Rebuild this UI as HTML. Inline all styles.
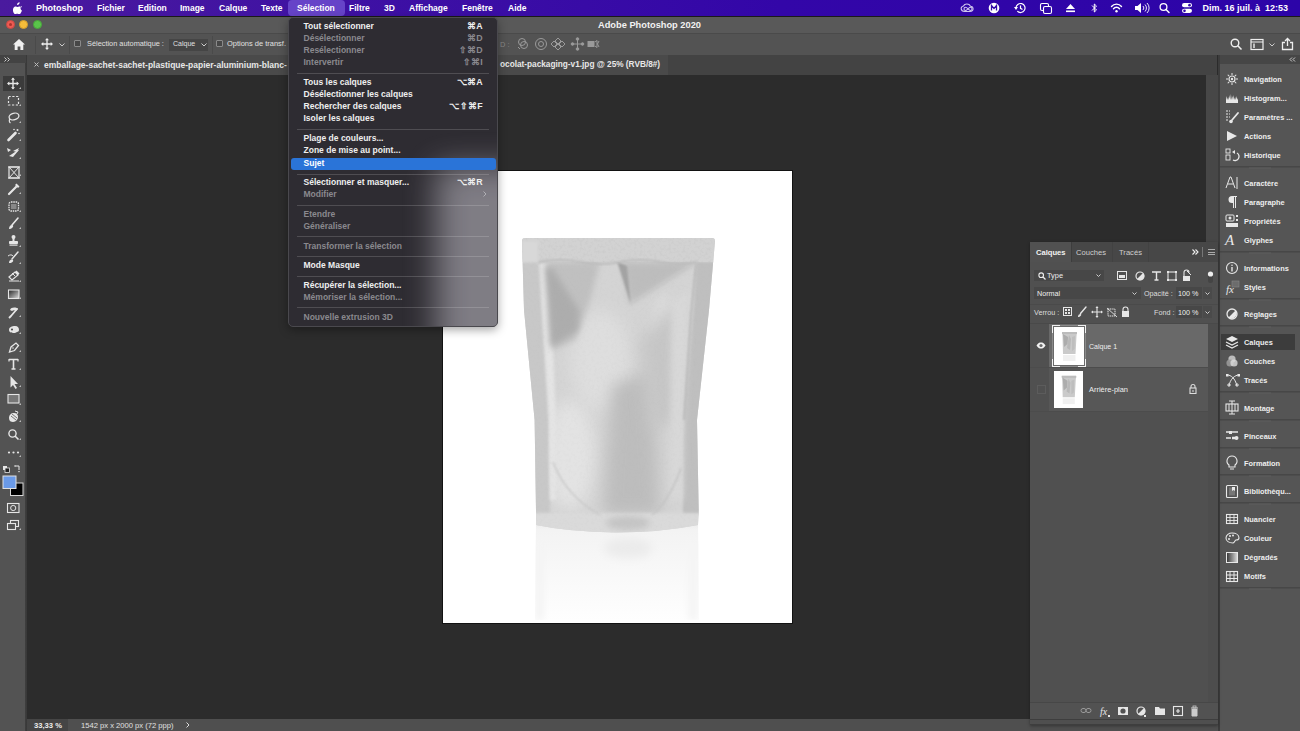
<!DOCTYPE html>
<html><head><meta charset="utf-8">
<style>
*{margin:0;padding:0;box-sizing:border-box}
html,body{width:1300px;height:731px;overflow:hidden;background:#2b2b2b;font-family:"Liberation Sans",sans-serif;color:#e6e6e6}
.a{position:absolute}
.t{position:absolute;white-space:nowrap;line-height:1}
#menubar{left:0;top:0;width:1300px;height:16px;background:linear-gradient(90deg,#4a1a9e 0%,#3d10a4 30%,#3306a8 60%,#2c04a8 100%)}
#menubar .t{color:#fff;font-size:8.5px;font-weight:700;top:4px}
#titlebar{left:0;top:16px;width:1300px;height:17px;background:#595959;border-top:1px solid #1a1a1a}
#options{left:0;top:33px;width:1300px;height:22px;background:#535353;border-top:1px solid #4a4a4a}
#toolbar{left:0;top:55px;width:26px;height:676px;background:#535353}
#tbhead{left:0;top:55px;width:26px;height:8px;background:#434343}
#tabbar{left:27px;top:55px;width:1190px;height:20px;background:#434343}
#tab{left:27px;top:55px;width:641px;height:20px;background:#4a4a4a}
#canvas{left:27px;top:75px;width:1179px;height:644px;background:#2c2c2c}
#vscroll{left:1206px;top:75px;width:12px;height:644px;background:#474747}
#status{left:27px;top:719px;width:1193px;height:12px;background:#4f4f4f}
#dock{left:1220px;top:64px;width:80px;height:667px;background:#555555}
#dockhead{left:1218px;top:55px;width:82px;height:9px;background:#464646}
#image{left:443px;top:171px;width:349px;height:452px;background:#fff;box-shadow:0 0 0 1px #121212}
#layers{left:1030px;top:242px;width:188px;height:483px;background:#505050;box-shadow:0 1px 3px rgba(0,0,0,.35)}
#menu{left:288px;top:17px;width:210px;height:310px;border-radius:5px;overflow:hidden;background:#2e2c32;border:1px solid #4a494e;box-shadow:0 3px 10px rgba(0,0,0,.35)}
</style></head><body>
<div id="menubar" class="a">
<svg class="a" style="left:13px;top:2px" width="10" height="12" viewBox="0 0 10 12"><path fill="#fff" d="M6.6 0.2c0.1 0.8-0.2 1.5-0.7 2.1-0.5 0.5-1.1 0.9-1.8 0.8-0.1-0.7 0.2-1.5 0.7-2 0.5-0.5 1.2-0.9 1.8-0.9zM8.8 4.1c-0.1 0.1-1.3 0.7-1.3 2.2 0 1.7 1.5 2.3 1.5 2.3s-0.4 1.2-1.2 2.3c-0.5 0.7-1 1.3-1.7 1.3-0.8 0-1-0.5-1.9-0.5-0.9 0-1.2 0.5-1.9 0.5-0.7 0-1.2-0.7-1.7-1.4C-0.1 9.400 -0.3 7.400 0.4 6 0.8 5.100 1.700 4.400 2.700 4.400c0.8 0 1.3 0.5 1.900 0.5 0.600 0 1-0.5 1.900-0.500 0.700 0 1.600 0.300 2.300 1.100z"/></svg>
<span class="t" style="left:36px;font-size:9px;font-weight:700">Photoshop</span>
<span class="t" style="left:97px">Fichier</span>
<span class="t" style="left:138px">Edition</span>
<span class="t" style="left:180px">Image</span>
<span class="t" style="left:219px">Calque</span>
<span class="t" style="left:261px">Texte</span>
<div class="a" style="left:288px;top:0;width:57px;height:16px;border-radius:4px;background:#6644c8"></div>
<span class="t" style="left:297px">Sélection</span>
<span class="t" style="left:349px">Filtre</span>
<span class="t" style="left:384px">3D</span>
<span class="t" style="left:409px">Affichage</span>
<span class="t" style="left:462px">Fenêtre</span>
<span class="t" style="left:508px">Aide</span>
<svg class="a" style="left:950px;top:0" width="250" height="16" viewBox="950 0 250 16">
<g fill="none" stroke="#cfc6ee" stroke-width="1.1" transform="translate(3.5 0)"><path d="M961 11.5C957 11.5 956.5 6.5 960 6 961 3.5 965.5 3.2 967 6.2 970 6 971 11.5 966.5 11.5Z"/><path d="M962 10.5C960 10.5 960 7.3 962 7.3S965 10.5 967 10.5 969 7.3 967 7.3 963.5 10.5 962 10.5Z"/></g>
<circle cx="994" cy="8" r="5.3" fill="#ffffff"/><path d="M991.5 10.5V5.5L994 8.5L996.5 5.5V10.5" fill="none" stroke="#3208a8" stroke-width="1.3"/>
<g fill="none" stroke="#ffffff" stroke-width="1.2"><path d="M1016 8A4.5 4.5 0 1 1 1017.3 11.2"/><path d="M1020.5 5.5V8.3L1022.5 9.5"/></g><path d="M1014 7L1016 10L1018 7Z" fill="#ffffff"/>
<g fill="none" stroke="#ffffff" stroke-width="1.1"><rect x="1040.5" y="3.5" width="8" height="7" rx="1.5"/><rect x="1043.5" y="6.5" width="8" height="7" rx="1.5" fill="#3208a8"/></g>
<path d="M1066 9L1070.5 4L1075 9Z" fill="#ffffff"/><rect x="1066" y="10.5" width="9" height="1.6" fill="#ffffff"/>
<path d="M1092 5.5L1096.5 10L1094.3 12V4L1096.5 6L1092 10.5" fill="none" stroke="#ffffff" stroke-width="1"/>
<g fill="none" stroke="#ffffff" stroke-width="1.4" stroke-linecap="round"><path d="M1111.5 6.5A6.5 6.5 0 0 1 1121.5 6.5"/><path d="M1113.5 8.7A3.8 3.8 0 0 1 1119.5 8.7"/></g><circle cx="1116.5" cy="11.3" r="1.2" fill="#ffffff"/>
<path d="M1135 6H1137.5L1141 3V13L1137.5 10H1135Z" fill="#ffffff"/><g fill="none" stroke="#ffffff" stroke-width="0.9"><path d="M1143 6A3 3 0 0 1 1143 10"/><path d="M1145 4.5A5 5 0 0 1 1145 11.5"/><path d="M1147 3A7 7 0 0 1 1147 13"/></g>
<circle cx="1163.5" cy="7" r="3.4" fill="none" stroke="#ffffff" stroke-width="1.3"/><path d="M1166 9.5L1169 12.5" stroke="#ffffff" stroke-width="1.5" stroke-linecap="round"/>
<rect x="1182" y="3" width="10" height="4.3" rx="2.15" fill="#ffffff"/><rect x="1182" y="8.7" width="10" height="4.3" rx="2.15" fill="#ffffff"/><circle cx="1189.5" cy="5.15" r="1.3" fill="#3208a8"/><circle cx="1184.5" cy="10.85" r="1.3" fill="#3208a8"/>
</svg>
<span class="t" style="left:1202.5px;font-size:9px;top:3.5px">Dim. 16 juil. à&nbsp; 12:53</span>
</div>
<div id="titlebar" class="a">
<div class="a" style="left:5.5px;top:3px;width:9px;height:9px;border-radius:50%;background:#ee5a52;border:1px solid #c94a44"><div class="a" style="left:2px;top:2px;width:3px;height:3px;border-radius:50%;background:#7a1a16;opacity:.6"></div></div>
<div class="a" style="left:19.2px;top:3px;width:9px;height:9px;border-radius:50%;background:#f5bd3a;border:1px solid #d49e2c"></div>
<div class="a" style="left:32.8px;top:3px;width:9px;height:9px;border-radius:50%;background:#5ac54a;border:1px solid #48a83c"></div>
<span class="t" style="left:598px;top:4px;font-size:9.27px;font-weight:700;color:#f2f2f2">Adobe Photoshop 2020</span>
</div>
<div id="options" class="a">
<svg class="a" style="left:13px;top:4.5px" width="12" height="11" viewBox="0 0 12 11"><path fill="#f0f0f0" d="M6 0 L12 5.5 L10.3 5.5 L10.3 11 L7.4 11 L7.4 7.5 L4.6 7.5 L4.6 11 L1.7 11 L1.7 5.5 L0 5.5Z"/></svg>
<div class="a" style="left:35px;top:2px;width:1px;height:18px;background:#4a4a4a"></div>
<svg class="a" style="left:41px;top:3.5px" width="12" height="12" viewBox="0 0 12 12"><path fill="none" stroke="#eee" stroke-width="1.3" d="M6 1V11M1 6H11"/><path fill="#eee" d="M6 0L8 2.3H4ZM6 12L8 9.7H4ZM0 6L2.3 4V8ZM12 6L9.7 4V8Z"/></svg>
<svg class="a" style="left:59px;top:8.5px" width="6" height="4" viewBox="0 0 6 4"><path fill="none" stroke="#ccc" stroke-width="1" d="M0.5 0.5L3 3L5.5 0.5"/></svg>
<div class="a" style="left:69px;top:2px;width:1px;height:18px;background:#4a4a4a"></div>
<div class="a" style="left:74px;top:6px;width:7px;height:7px;border:1px solid #8a8a8a;background:#474747;border-radius:1px"></div>
<span class="t" style="left:87px;top:6px;font-size:7.37px;color:#e0e0e0">Sélection automatique :</span>
<div class="a" style="left:169px;top:5px;width:39px;height:12px;background:#454545"></div>
<span class="t" style="left:173px;top:6px;font-size:7px;color:#e0e0e0">Calque</span>
<svg class="a" style="left:201px;top:8.5px" width="6" height="4" viewBox="0 0 6 4"><path fill="none" stroke="#ccc" stroke-width="1" d="M0.5 0.5L3 3L5.5 0.5"/></svg>
<div class="a" style="left:212px;top:2px;width:1px;height:18px;background:#4a4a4a"></div>
<div class="a" style="left:216px;top:6px;width:7px;height:7px;border:1px solid #8a8a8a;background:#474747;border-radius:1px"></div>
<span class="t" style="left:227px;top:6px;font-size:7.47px;color:#e0e0e0">Options de transf.</span>
<span class="t" style="left:500px;top:7px;font-size:7.4px;color:#8a8a8a">D :</span>
<svg class="a" style="left:516px;top:3px" width="90" height="14" viewBox="0 0 90 14" fill="none" stroke="#9a9a9a" stroke-width="1">
<circle cx="6" cy="5" r="3.5"/><circle cx="8" cy="8" r="3.5"/><path d="M2 10l2 2"/>
<circle cx="25" cy="7" r="5.5"/><circle cx="25" cy="7" r="2.5"/>
<path d="M42 1l3 3-3 3-3-3zM42 7l3 3-3 3-3-3zM38 4l3 3-3 3-3-3zM46 4l3 3-3 3-3-3z"/>
<g transform="translate(-2.5 0)"><path d="M59 7h10M64 2v10"/><circle cx="64" cy="2" r="1.3" fill="#9a9a9a"/><circle cx="64" cy="12" r="1.3" fill="#9a9a9a"/><circle cx="59" cy="7" r="1.3" fill="#9a9a9a"/><circle cx="69" cy="7" r="1.3" fill="#9a9a9a"/></g>
<g transform="translate(-3 0)"><rect x="75" y="4.5" width="6" height="5" fill="#9a9a9a"/><path d="M82 5l2-1.5v7L82 9M86 4l-1.5 3 1.5 3"/></g>
</svg>
<svg class="a" style="left:1230px;top:4px" width="13" height="13" viewBox="0 0 13 13"><circle cx="5" cy="5" r="3.8" fill="none" stroke="#eee" stroke-width="1.4"/><path d="M7.8 7.8L11.5 11.5" stroke="#eee" stroke-width="1.6"/></svg>
<svg class="a" style="left:1250px;top:4px" width="14" height="13" viewBox="0 0 14 13"><rect x="1" y="1.5" width="12" height="10" fill="none" stroke="#eee" stroke-width="1.2"/><path d="M1 4H13" stroke="#eee" stroke-width="1"/><path d="M4 5.5V10" stroke="#eee" stroke-width="1.4"/></svg>
<svg class="a" style="left:1269px;top:9px" width="6" height="4" viewBox="0 0 6 4"><path fill="none" stroke="#ccc" stroke-width="1" d="M0.5 0.5L3 3L5.5 0.5"/></svg>
<svg class="a" style="left:1281px;top:3px" width="13" height="14" viewBox="0 0 13 14"><path fill="none" stroke="#eee" stroke-width="1.3" d="M4 5.5H1.5V12.5H11.5V5.5H9M6.5 9V1.5M4 4L6.5 1.5L9 4"/></svg>
</div>
<div id="toolbar" class="a"></div>
<div class="a" style="left:25px;top:55px;width:3px;height:676px;background:linear-gradient(90deg,#3f3f3f,#343434)"></div>
<svg class="a" style="left:0;top:0" width="26" height="731" viewBox="0 0 26 731"><rect x="3" y="76" width="21" height="15" fill="#3b3b3b"/><path d="M13 78.5V88.5M8 83.5H18" stroke="#e6e6e6" stroke-width="1.4"/><path fill="#e6e6e6" d="M13 77.5l2 2.3h-4zM13 89.5l2 -2.3h-4zM7 83.5l2.3 2v-4zM19 83.5l-2.3 2v-4z"/><rect x="8.5" y="96.5" width="10" height="8.5" fill="none" stroke="#e6e6e6" stroke-width="1.2" stroke-dasharray="2.2 1.6"/><ellipse cx="14" cy="116.5" rx="5" ry="3.3" fill="none" stroke="#e6e6e6" stroke-width="1.3" transform="rotate(-15 14 116.5)"/><path d="M10 119c-1 1 -1 3 0.5 4" fill="none" stroke="#e6e6e6" stroke-width="1.2"/><path d="M8.5 140L15.5 133" stroke="#e6e6e6" stroke-width="2.6" stroke-linecap="round"/><circle cx="17.5" cy="130" r="1" fill="#e6e6e6"/><circle cx="14" cy="129.5" r="0.8" fill="#e6e6e6"/><circle cx="19" cy="133.5" r="0.8" fill="#e6e6e6"/><path fill="#e6e6e6" d="M7 148l4 2-3 2zM9 156l9-6 1 0-6 7z"/><path fill="#e6e6e6" d="M13 151l6-3-2 4z"/><rect x="9" y="167" width="10" height="11" fill="none" stroke="#e6e6e6" stroke-width="1.2"/><path d="M9 167L19 178M19 167L9 178" stroke="#e6e6e6" stroke-width="1"/><path d="M8 167H20M8 178H20" stroke="#e6e6e6" stroke-width="1.2"/><path d="M9 194L16 187" stroke="#e6e6e6" stroke-width="2.2" stroke-linecap="round" fill="none"/><path d="M15 185l3 3 1.5-1.5-3-3z" fill="#e6e6e6"/><rect x="9" y="202" width="9.5" height="9" rx="2" fill="none" stroke="#e6e6e6" stroke-width="1.3" stroke-dasharray="1.5 0.8"/><rect x="11" y="204" width="5.5" height="5" fill="#888"/><path d="M18 218L12 225" stroke="#e6e6e6" stroke-width="1.6" stroke-linecap="round"/><path d="M9 229c0-2 1-4 3-4 1.5 0 1.5 1.5 0.5 2.5-1 1-2.5 1.5-3.5 1.5z" fill="#e6e6e6"/><circle cx="13.5" cy="237" r="2" fill="#e6e6e6"/><rect x="12.5" y="238" width="2" height="3" fill="#e6e6e6"/><rect x="9" y="241" width="9" height="3" rx="0.8" fill="#e6e6e6"/><rect x="9.5" y="244.5" width="8" height="1.2" fill="#e6e6e6"/><path d="M18 252L12 259" stroke="#e6e6e6" stroke-width="1.5" stroke-linecap="round"/><path d="M9 263c0-2 1-3.5 3-3.5 1.5 0 1.5 1.5 0.5 2.5-1 1-2.5 1-3.5 1z" fill="#e6e6e6"/><path d="M8 256c2-1.5 4-1.5 5 0" fill="none" stroke="#e6e6e6" stroke-width="1"/><path d="M9 277l6-5 3 3-6 5z" fill="none" stroke="#e6e6e6" stroke-width="1.2"/><path d="M12 273l3 3" stroke="#e6e6e6" stroke-width="1"/><path d="M9 281H19" stroke="#e6e6e6" stroke-width="1"/><path d="M15 272l3 3 1.5-1.5-3-3z" fill="#e6e6e6"/><defs><linearGradient id="gr" x1="0" y1="0" x2="1" y2="1"><stop offset="0" stop-color="#222"/><stop offset="1" stop-color="#ddd"/></linearGradient></defs><rect x="8.5" y="290" width="10.5" height="8.5" fill="url(#gr)" stroke="#e6e6e6" stroke-width="1.1"/><path d="M11 316L17 309" stroke="#e6e6e6" stroke-width="1.8" stroke-linecap="round"/><path d="M10 310c1-3 6-3 8-1l-2 2c-1-1-3-1-4 0z" fill="#e6e6e6"/><path d="M9 318l2-2" stroke="#e6e6e6" stroke-width="1.8"/><path d="M9 330c0-3 3-4 6-4 3 0 4 2 4 4 0 1-1 2-2 2l-2 1c-2 0-6 0-6-3z" fill="#e6e6e6"/><circle cx="12" cy="329.5" r="1" fill="#444"/><path d="M9.5 352l1.5-5 5-4 2.5 2.5-4 5z" fill="none" stroke="#e6e6e6" stroke-width="1.3"/><circle cx="13" cy="348" r="0.8" fill="#e6e6e6"/><path d="M9 359.5H18M13.5 359.5V369M11.5 369H15.5" stroke="#e6e6e6" stroke-width="1.6" fill="none"/><path d="M9 359V361.5M18 359V361.5" stroke="#e6e6e6" stroke-width="1.2"/><path d="M10.5 376V387.5L13 385L15.5 389L17 388L14.5 384H18z" fill="#e6e6e6"/><rect x="8" y="394.5" width="11" height="8.5" fill="#777" stroke="#e6e6e6" stroke-width="1.1"/><path d="M9 418c0-3 2-5 5-5s4 2 4 4-2 5-5 5c-2 0-4-1-4-4z" fill="#e6e6e6"/><path d="M11 416l5 4M12 414l5 4" stroke="#555" stroke-width="0.8"/><path d="M15 411l3 1-1 2" fill="none" stroke="#e6e6e6" stroke-width="1"/><circle cx="12.5" cy="433.5" r="3.6" fill="none" stroke="#e6e6e6" stroke-width="1.4"/><path d="M15 436L18.5 439.5" stroke="#e6e6e6" stroke-width="1.6"/><circle cx="9" cy="452.5" r="1.1" fill="#e6e6e6"/><circle cx="13.5" cy="452.5" r="1.1" fill="#e6e6e6"/><circle cx="18" cy="452.5" r="1.1" fill="#e6e6e6"/><rect x="3" y="466" width="4" height="4" fill="#e6e6e6"/><rect x="5" y="468" width="4.5" height="4.5" fill="#222" stroke="#e6e6e6" stroke-width="0.8"/><path d="M15 466h4v4" fill="none" stroke="#e6e6e6" stroke-width="1"/><path d="M14.5 465l1.5 1-1.5 1zM18 471l1 1.5 1-1.5z" fill="#e6e6e6"/><rect x="10.5" y="483" width="12.5" height="12.5" fill="#000" stroke="#d8d8d8" stroke-width="1"/><rect x="3" y="476" width="13" height="12.5" fill="#6a9ae8" stroke="#e0e0e0" stroke-width="1"/><rect x="7.5" y="503.5" width="11.5" height="9" fill="none" stroke="#e6e6e6" stroke-width="1.1"/><circle cx="13.2" cy="508" r="2.6" fill="none" stroke="#e6e6e6" stroke-width="1"/><rect x="10.5" y="520.5" width="8" height="6" fill="none" stroke="#e6e6e6" stroke-width="1.1"/><rect x="7.5" y="523.5" width="8" height="6" fill="#535353" stroke="#e6e6e6" stroke-width="1.1"/><path d="M21 89h-2l2-2z" fill="#bbb"/><path d="M21 106h-2l2-2z" fill="#bbb"/><path d="M21 123h-2l2-2z" fill="#bbb"/><path d="M21 141h-2l2-2z" fill="#bbb"/><path d="M21 159h-2l2-2z" fill="#bbb"/><path d="M21 176h-2l2-2z" fill="#bbb"/><path d="M21 194h-2l2-2z" fill="#bbb"/><path d="M21 212h-2l2-2z" fill="#bbb"/><path d="M21 229h-2l2-2z" fill="#bbb"/><path d="M21 247h-2l2-2z" fill="#bbb"/><path d="M21 264h-2l2-2z" fill="#bbb"/><path d="M21 282h-2l2-2z" fill="#bbb"/><path d="M21 299h-2l2-2z" fill="#bbb"/><path d="M21 317h-2l2-2z" fill="#bbb"/><path d="M21 334h-2l2-2z" fill="#bbb"/><path d="M21 352h-2l2-2z" fill="#bbb"/><path d="M21 370h-2l2-2z" fill="#bbb"/><path d="M21 387h-2l2-2z" fill="#bbb"/><path d="M21 405h-2l2-2z" fill="#bbb"/><path d="M21 422h-2l2-2z" fill="#bbb"/><path d="M21 440h-2l2-2z" fill="#bbb"/><path d="M21 457h-2l2-2z" fill="#bbb"/><path d="M21 530h-2l2-2z" fill="#bbb"/></svg>
<div id="tbhead" class="a"><svg class="a" style="left:4px;top:2px" width="7" height="5" viewBox="0 0 7 5"><path d="M0.5 0.5L2.5 2.5L0.5 4.5M3.5 0.5L5.5 2.5L3.5 4.5" fill="none" stroke="#ccc" stroke-width="1"/></svg></div>
<div id="tabbar" class="a"></div>
<div id="tab" class="a">
<svg class="a" style="left:7px;top:7px" width="5" height="5" viewBox="0 0 5 5"><path d="M0.5 0.5L4.5 4.5M4.5 0.5L0.5 4.5" stroke="#bbb" stroke-width="1"/></svg>
<span class="t" style="left:17px;top:6px;font-size:8.51px;font-weight:700;color:#e8e8e8">emballage-sachet-sachet-plastique-papier-aluminium-blanc-</span><span class="t" style="left:473px;top:6px;font-size:8.25px;font-weight:700;color:#e8e8e8">ocolat-packaging-v1.jpg @ 25% (RVB/8#)</span>
</div>
<div id="canvas" class="a"></div>
<div id="vscroll" class="a"></div>
<div id="status" class="a">
<div class="a" style="left:0;top:0;width:41px;height:12px;background:#454545"></div>
<span class="t" style="left:7px;top:2.5px;font-size:7.63px;font-weight:700;color:#ececec">33,33 %</span>
<span class="t" style="left:54px;top:2.5px;font-size:7.6px;color:#e0e0e0">1542 px x 2000 px (72 ppp)</span>
<svg class="a" style="left:159px;top:3px" width="4" height="6" viewBox="0 0 4 6"><path d="M0.5 0.5L3 3L0.5 5.5" fill="none" stroke="#ddd" stroke-width="1"/></svg>
</div>
<div id="dockhead" class="a"></div>
<div id="dock" class="a"></div>
<div class="a" style="left:1218px;top:55px;width:2px;height:676px;background:#3c3c3c"></div>
<svg class="a" style="left:0;top:0" width="1300" height="731" viewBox="0 0 1300 731"><defs><linearGradient id="gr2" x1="0" y1="0" x2="1" y2="0"><stop offset="0" stop-color="#333"/><stop offset="1" stop-color="#ddd"/></linearGradient></defs><rect x="1221" y="334" width="74" height="16" fill="#3c3c3c"/><g transform="translate(1226,73)"><circle cx="6" cy="6" r="3" fill="none" stroke="#e8e8e8" stroke-width="1.2"/><circle cx="6" cy="6" r="1.2" fill="#e8e8e8"/><path d="M6 0L6 2" transform="rotate(0 6 6)" stroke="#e8e8e8" stroke-width="1"/><path d="M6 0L6 2" transform="rotate(45 6 6)" stroke="#e8e8e8" stroke-width="1"/><path d="M6 0L6 2" transform="rotate(90 6 6)" stroke="#e8e8e8" stroke-width="1"/><path d="M6 0L6 2" transform="rotate(135 6 6)" stroke="#e8e8e8" stroke-width="1"/><path d="M6 0L6 2" transform="rotate(180 6 6)" stroke="#e8e8e8" stroke-width="1"/><path d="M6 0L6 2" transform="rotate(225 6 6)" stroke="#e8e8e8" stroke-width="1"/><path d="M6 0L6 2" transform="rotate(270 6 6)" stroke="#e8e8e8" stroke-width="1"/><path d="M6 0L6 2" transform="rotate(315 6 6)" stroke="#e8e8e8" stroke-width="1"/></g><text x="1244" y="81.8" font-family="Liberation Sans" font-weight="700" font-size="7.4" fill="#eeeeee">Navigation</text><g transform="translate(1226,93)"><path d="M0 10V7L0.7 3 1.4 7 2.1 4 2.8 7 3.5 2 4.2 7 4.9 1 5.6 7 6.3 3 7 7 7.7 2 8.4 7 9.1 4 9.8 7 10.5 3 11.2 7 12 5V10Z" fill="#e8e8e8"/></g><text x="1244" y="100.8" font-family="Liberation Sans" font-weight="700" font-size="7.4" fill="#eeeeee">Histogram...</text><g transform="translate(1226,110)"><path d="M0 1H2M0 4H2M0 7H2M0 10H2M3 1H4M3 4H4M3 7H4" stroke="#e8e8e8" stroke-width="1"/><path d="M12 3L6 10" stroke="#e8e8e8" stroke-width="1.8" stroke-linecap="round"/><circle cx="5" cy="11.5" r="1.8" fill="#e8e8e8"/></g><text x="1244" y="119.8" font-family="Liberation Sans" font-weight="700" font-size="7.4" fill="#eeeeee">Paramètres ...</text><g transform="translate(1226,131)"><path d="M1 0L11 5L1 10Z" fill="#e8e8e8"/></g><text x="1244" y="138.8" font-family="Liberation Sans" font-weight="700" font-size="7.4" fill="#eeeeee">Actions</text><g transform="translate(1226,149)"><rect x="0" y="0" width="4" height="4" fill="none" stroke="#e8e8e8" stroke-width="0.9"/><rect x="0" y="6" width="4" height="5" fill="none" stroke="#e8e8e8" stroke-width="0.9"/><path d="M11 4A4 4 0 1 1 7 11" fill="none" stroke="#e8e8e8" stroke-width="1.3"/><path d="M6 3L9 1V5Z" fill="#e8e8e8"/></g><text x="1244" y="157.8" font-family="Liberation Sans" font-weight="700" font-size="7.4" fill="#eeeeee">Historique</text><rect x="1220" y="166" width="80" height="1.5" fill="#474747"/><rect x="1249" y="167.5" width="22" height="1" fill="#5e5e5e"/><g transform="translate(1226,177)"><path d="M0 11L4 0H5L9 11M2 7H7" fill="none" stroke="#e8e8e8" stroke-width="1"/><path d="M11 0V12" stroke="#e8e8e8" stroke-width="1"/></g><text x="1244" y="185.8" font-family="Liberation Sans" font-weight="700" font-size="7.4" fill="#eeeeee">Caractère</text><g transform="translate(1227,196)"><path d="M5 0H10V1H9V12H8V1H7V12H6V7H5A3.5 3.5 0 0 1 5 0Z" fill="#e8e8e8"/></g><text x="1244" y="204.8" font-family="Liberation Sans" font-weight="700" font-size="7.4" fill="#eeeeee">Paragraphe</text><g transform="translate(1226,215)"><rect x="0" y="0" width="8" height="6" rx="1" fill="none" stroke="#e8e8e8" stroke-width="1"/><circle cx="4" cy="3" r="1.5" fill="#e8e8e8"/><rect x="10" y="0" width="2" height="2" fill="#e8e8e8"/><rect x="10" y="4" width="2" height="2" fill="#e8e8e8"/><rect x="0" y="8" width="12" height="4" fill="#e8e8e8"/></g><text x="1244" y="223.8" font-family="Liberation Sans" font-weight="700" font-size="7.4" fill="#eeeeee">Propriétés</text><text x="1225" y="245" font-family="Liberation Serif" font-style="italic" font-size="15" fill="#e8e8e8">A</text><text x="1244" y="242.8" font-family="Liberation Sans" font-weight="700" font-size="7.4" fill="#eeeeee">Glyphes</text><rect x="1220" y="251" width="80" height="1.5" fill="#474747"/><rect x="1249" y="252.5" width="22" height="1" fill="#5e5e5e"/><g transform="translate(1226,262)"><circle cx="6" cy="6" r="5.5" fill="none" stroke="#e8e8e8" stroke-width="1.1"/><path d="M6 5V9.5" stroke="#e8e8e8" stroke-width="1.4"/><circle cx="6" cy="3.2" r="0.8" fill="#e8e8e8"/></g><text x="1244" y="270.8" font-family="Liberation Sans" font-weight="700" font-size="7.4" fill="#eeeeee">Informations</text><g transform="translate(1226,281)"><rect x="6" y="0" width="7" height="6" fill="#6c6c6c" stroke="#888" stroke-width="0.6"/><text x="0" y="12" font-family="Liberation Serif" font-style="italic" font-size="11" fill="#e8e8e8">fx</text></g><text x="1244" y="289.8" font-family="Liberation Sans" font-weight="700" font-size="7.4" fill="#eeeeee">Styles</text><rect x="1220" y="298" width="80" height="1.5" fill="#474747"/><rect x="1249" y="299.5" width="22" height="1" fill="#5e5e5e"/><g transform="translate(1226,308)"><circle cx="6" cy="6" r="5" fill="none" stroke="#e8e8e8" stroke-width="1.3"/><path d="M2.5 9.5L9.5 2.5A5 5 0 0 1 2.5 9.5Z" fill="#e8e8e8"/></g><text x="1244" y="316.8" font-family="Liberation Sans" font-weight="700" font-size="7.4" fill="#eeeeee">Réglages</text><rect x="1220" y="325" width="80" height="1.5" fill="#474747"/><rect x="1249" y="326.5" width="22" height="1" fill="#5e5e5e"/><g transform="translate(1226,336)"><path d="M6 0L12 3L6 6L0 3Z" fill="#e8e8e8"/><path d="M0 6L6 9L12 6M0 9L6 12L12 9" fill="none" stroke="#e8e8e8" stroke-width="1.2"/></g><text x="1244" y="344.8" font-family="Liberation Sans" font-weight="700" font-size="7.4" fill="#eeeeee">Calques</text><g transform="translate(1226,355)"><circle cx="6" cy="4" r="3.6" fill="#bbb"/><circle cx="4" cy="8" r="3.6" fill="#999" opacity=".9"/><circle cx="8" cy="8" r="3.6" fill="#ddd" opacity=".8"/></g><text x="1244" y="363.8" font-family="Liberation Sans" font-weight="700" font-size="7.4" fill="#eeeeee">Couches</text><g transform="translate(1226,374)"><path d="M1 1C5 1 9 4 11 12M13 1C9 1 4 5 3 12" fill="none" stroke="#e8e8e8" stroke-width="1"/><rect x="0" y="0" width="2.5" height="2.5" fill="#e8e8e8"/><rect x="11.5" y="0" width="2.5" height="2.5" fill="#e8e8e8"/><circle cx="3" cy="11" r="1.2" fill="none" stroke="#e8e8e8"/><circle cx="11" cy="11" r="1.2" fill="none" stroke="#e8e8e8"/></g><text x="1244" y="382.8" font-family="Liberation Sans" font-weight="700" font-size="7.4" fill="#eeeeee">Tracés</text><rect x="1220" y="391" width="80" height="1.5" fill="#474747"/><rect x="1249" y="392.5" width="22" height="1" fill="#5e5e5e"/><g transform="translate(1226,401)"><rect x="0" y="3" width="12" height="7" fill="none" stroke="#e8e8e8" stroke-width="1.1"/><path d="M3 3V10M6 0V13M3 0H9M3 13H9M9 3V10" stroke="#e8e8e8" stroke-width="1"/></g><text x="1244" y="410.8" font-family="Liberation Sans" font-weight="700" font-size="7.4" fill="#eeeeee">Montage</text><rect x="1220" y="419" width="80" height="1.5" fill="#474747"/><rect x="1249" y="420.5" width="22" height="1" fill="#5e5e5e"/><g transform="translate(1226,431)"><path d="M0 1H12M0 7H5" stroke="#e8e8e8" stroke-width="1.3"/><rect x="3" y="0" width="3" height="3" fill="#e8e8e8"/><path d="M6 7H9" stroke="#e8e8e8" stroke-width="2.5"/><circle cx="10.5" cy="7" r="2" fill="#e8e8e8"/></g><text x="1244" y="438.8" font-family="Liberation Sans" font-weight="700" font-size="7.4" fill="#eeeeee">Pinceaux</text><rect x="1220" y="447" width="80" height="1.5" fill="#474747"/><rect x="1249" y="448.5" width="22" height="1" fill="#5e5e5e"/><g transform="translate(1227,456)"><path d="M5 0A5 5 0 0 1 8 9V11H2V9A5 5 0 0 1 5 0Z" fill="none" stroke="#e8e8e8" stroke-width="1.1"/><path d="M3 13H7" stroke="#e8e8e8" stroke-width="1"/></g><text x="1244" y="465.8" font-family="Liberation Sans" font-weight="700" font-size="7.4" fill="#eeeeee">Formation</text><rect x="1220" y="474" width="80" height="1.5" fill="#474747"/><rect x="1249" y="475.5" width="22" height="1" fill="#5e5e5e"/><g transform="translate(1226,485)"><rect x="0.5" y="0.5" width="11" height="12" rx="1" fill="none" stroke="#e8e8e8" stroke-width="1.1"/><rect x="3" y="2.5" width="6" height="8" fill="#777"/><path d="M6 2V6L7.5 5L9 6V2" fill="#e8e8e8"/></g><text x="1244" y="493.8" font-family="Liberation Sans" font-weight="700" font-size="7.4" fill="#eeeeee">Bibliothèqu...</text><rect x="1220" y="502" width="80" height="1.5" fill="#474747"/><rect x="1249" y="503.5" width="22" height="1" fill="#5e5e5e"/><g transform="translate(1226,514)"><rect x="0.5" y="0.5" width="11" height="9" fill="none" stroke="#e8e8e8" stroke-width="1.1"/><path d="M0 3.5H12M0 6.5H12M4 0V10M8 0V10" stroke="#e8e8e8" stroke-width="0.9"/></g><text x="1244" y="521.8" font-family="Liberation Sans" font-weight="700" font-size="7.4" fill="#eeeeee">Nuancier</text><g transform="translate(1226,533)"><path d="M6 0C10 0 13 2 13 5 13 7 11 7 10 7 9 7 9 9 7 10 3 10 0 8 0 5 0 2 3 0 6 0Z" fill="none" stroke="#e8e8e8" stroke-width="1.1"/><circle cx="4" cy="3" r="1" fill="#e8e8e8"/><circle cx="7" cy="2.5" r="1" fill="#e8e8e8"/><circle cx="3" cy="6" r="1" fill="#e8e8e8"/></g><text x="1244" y="540.8" font-family="Liberation Sans" font-weight="700" font-size="7.4" fill="#eeeeee">Couleur</text><g transform="translate(1226,552)"><rect x="0.5" y="0.5" width="11" height="10" fill="url(#gr2)" stroke="#e8e8e8" stroke-width="1"/></g><text x="1244" y="559.8" font-family="Liberation Sans" font-weight="700" font-size="7.4" fill="#eeeeee">Dégradés</text><g transform="translate(1226,571)"><rect x="0.5" y="0.5" width="11" height="10" fill="none" stroke="#e8e8e8" stroke-width="1.1"/><path d="M4 0V11M8 0V11M0 4H12M0 7.5H12" stroke="#e8e8e8" stroke-width="1"/></g><text x="1244" y="578.8" font-family="Liberation Sans" font-weight="700" font-size="7.4" fill="#eeeeee">Motifs</text><rect x="1220" y="587" width="80" height="1.5" fill="#474747"/><rect x="1249" y="588.5" width="22" height="1" fill="#5e5e5e"/></svg>
<svg class="a" style="left:1289px;top:57px" width="7" height="5" viewBox="0 0 7 5"><path d="M3 0.5L1 2.5L3 4.5M6 0.5L4 2.5L6 4.5" fill="none" stroke="#ccc" stroke-width="1"/></svg>
<div id="image" class="a"><svg class="a" style="left:0;top:0" width="349" height="452" viewBox="0 0 349 452">
<defs>
<clipPath id="pc"><path d="M82.0 67.0 L269.0 67.0 Q272.0 67.0 272.0 70.0 L266.0 139.0 L254.0 249.0 L255.7 339.0 L255.0 354.0 Q217.0 361.5 172.0 361.5 Q127.0 361.0 93.0 354.0 L93.0 339.0 L91.6 249.0 L81.0 139.0 L79.0 70.0 Q79.0 67.0 82.0 67.0 Z"/></clipPath>
<clipPath id="rc"><path d="M93.0 349.0 Q127.0 357.0 172.0 357.5 Q217.0 357.5 255.0 349.0 L256.0 449.0 L92.0 449.0 Z"/></clipPath>
<linearGradient id="rg" x1="0" y1="0" x2="0" y2="1"><stop offset="0" stop-color="#e9e9e9"/><stop offset="0.1" stop-color="#f3f3f3"/><stop offset="1" stop-color="#fefefe"/></linearGradient>
<filter id="b8" x="-50%" y="-50%" width="200%" height="200%"><feGaussianBlur stdDeviation="8"/></filter>
<filter id="b5" x="-50%" y="-50%" width="200%" height="200%"><feGaussianBlur stdDeviation="5"/></filter>
<filter id="b3" x="-50%" y="-50%" width="200%" height="200%"><feGaussianBlur stdDeviation="3"/></filter>
<filter id="b2" x="-50%" y="-50%" width="200%" height="200%"><feGaussianBlur stdDeviation="1.8"/></filter>
<filter id="b1" x="-50%" y="-50%" width="200%" height="200%"><feGaussianBlur stdDeviation="0.9"/></filter>
<filter id="tex" x="0" y="0" width="100%" height="100%"><feTurbulence type="fractalNoise" baseFrequency="0.35" numOctaves="2" seed="3"/><feColorMatrix values="0 0 0 0 0.5  0 0 0 0 0.5  0 0 0 0 0.5  0 0 0 1.6 -0.75"/></filter>
</defs>
<path d="M93.0 349.0 Q127.0 357.0 172.0 357.5 Q217.0 357.5 255.0 349.0 L256.0 449.0 L92.0 449.0 Z" fill="url(#rg)"/>
<g clip-path="url(#rc)">
<ellipse cx="185" cy="377" rx="24" ry="10" fill="#ebebeb" filter="url(#b5)"/>
<rect x="92" y="369" width="9" height="80" fill="#f4f4f4" filter="url(#b3)"/>
<rect x="245" y="369" width="10" height="80" fill="#f5f5f5" filter="url(#b3)"/>
</g>
<g clip-path="url(#pc)">
<rect x="70" y="60" width="220" height="320" fill="#d4d4d4"/>
<ellipse cx="157" cy="189" rx="30" ry="50" fill="#dedede" filter="url(#b8)"/>
<ellipse cx="127" cy="284" rx="25" ry="55" fill="#e3e3e3" filter="url(#b8)"/>
<ellipse cx="222" cy="169" rx="14" ry="45" fill="#dcdcdc" filter="url(#b5)"/>
<polygon points="169.0,214.0 209.0,201.0 217.0,344.0 160.0,344.0" fill="#bdbdbd" filter="url(#b8)"/>
<polygon points="197.0,169.0 237.0,129.0 233.0,249.0 207.0,259.0" fill="#c6c6c6" filter="url(#b8)"/>
<polygon points="77.0,91.0 95.0,91.0 99.0,139.0 106.0,249.0 107.0,344.0 87.0,344.0 77.0,129.0" fill="#c8c8c8" filter="url(#b2)"/>
<polygon points="97.0,93.0 103.0,93.0 109.0,149.0 113.0,249.0 113.0,329.0 107.0,329.0 106.0,249.0 99.0,139.0" fill="#e4e4e4" filter="url(#b2)"/>
<polygon points="254.0,91.0 277.0,91.0 277.0,344.0 240.0,344.0 240.0,269.0 241.0,249.0 250.5,139.0" fill="#bfbfbf" filter="url(#b1)"/>
<polygon points="229.0,129.0 247.0,119.0 241.0,249.0 240.0,329.0 227.0,329.0" fill="#d8d8d8" filter="url(#b3)"/>
<path d="M253.0 92.0 L248.0 144.0 L241.0 249.0" fill="none" stroke="#acacac" stroke-width="1.3" filter="url(#b1)"/>
<polygon points="105.0,91.0 157.0,91.0 147.0,129.0 132.0,169.0 109.0,179.0" fill="#c0c0c0" filter="url(#b3)"/>
<polygon points="102.0,95.0 109.0,97.0 123.0,119.0 136.0,139.0 135.0,159.0 108.0,176.0 105.0,129.0" fill="#adadad" filter="url(#b3)"/>
<polygon points="179.0,91.0 254.0,91.0 187.0,133.0" fill="#bdbdbd" filter="url(#b3)"/>
<polygon points="174.0,90.0 184.0,95.0 188.0,134.0" fill="#a3a3a3" filter="url(#b1)"/>
<path d="M187.0 133.0 L252.0 92.0" stroke="#c8c8c8" stroke-width="1.5" filter="url(#b1)"/>
<rect x="75" y="65" width="200" height="26" fill="#d2d2d2"/>
<rect x="75" y="65" width="200" height="26" filter="url(#tex)" opacity=".4"/>
<path d="M95.0 91.0 Q117.0 87.0 137.0 91.0 T177.0 91.0 T217.0 91.0 T254.0 91.0" fill="none" stroke="#bcbcbc" stroke-width="2" filter="url(#b1)"/>
<rect x="79" y="70" width="16" height="21" fill="#d8d8d8" filter="url(#b2)"/>
<rect x="75" y="342" width="200" height="22" fill="#dadada" filter="url(#b2)"/>
<ellipse cx="185" cy="352" rx="22" ry="7" fill="#c5c5c5" filter="url(#b3)"/>
<path d="M167.0 345.0 L197.0 345.0" stroke="#e6e6e6" stroke-width="1.5" filter="url(#b1)"/>
<path d="M110.0 291.0 Q122.0 324.0 157.0 344.0" fill="none" stroke="#c9c9c9" stroke-width="1.5" filter="url(#b1)"/>
<path d="M238.0 297.0 Q227.0 329.0 209.0 344.0" fill="none" stroke="#c3c3c3" stroke-width="1.5" filter="url(#b1)"/>
<rect x="70" y="90" width="220" height="290" filter="url(#tex)" opacity=".1"/>
</g>
</svg></div>
<div id="layers" class="a"><div class="a" style="left:0;top:0;width:188px;height:20px;background:#474747"></div><div class="a" style="left:0;top:0;width:41px;height:20px;background:#515151"></div><div class="a" style="left:41px;top:0;width:1px;height:20px;background:#3d3d3d"></div><div class="a" style="left:82px;top:0;width:1px;height:20px;background:#424242"></div><div class="a" style="left:118px;top:0;width:1px;height:20px;background:#424242"></div><span class="t" style="left:6px;top:7px;font-size:7.6px;font-weight:700;color:#f2f2f2">Calques</span><span class="t" style="left:46px;top:7px;font-size:7.6px;color:#cfcfcf">Couches</span><span class="t" style="left:89px;top:7px;font-size:7.6px;color:#cfcfcf">Tracés</span><svg class="a" style="left:162px;top:7px" width="7" height="6" viewBox="0 0 7 6"><path d="M0.5 0.5L3 3L0.5 5.5M3.5 0.5L6 3L3.5 5.5" fill="none" stroke="#eee" stroke-width="1.1"/></svg><div class="a" style="left:172px;top:5px;width:1px;height:10px;background:#777"></div><div class="a" style="left:178px;top:7px;width:7px;height:6px;border-top:1.5px solid #aaa;border-bottom:1.5px solid #aaa"></div><div class="a" style="left:178px;top:9.5px;width:7px;height:1.2px;background:#aaa"></div><div class="a" style="left:4px;top:28px;width:70px;height:11px;background:#474747"></div><svg class="a" style="left:8px;top:29.5px" width="8" height="8" viewBox="0 0 8 8"><circle cx="3.2" cy="3.2" r="2.3" fill="none" stroke="#eee" stroke-width="1.1"/><path d="M5 5L7.5 7.5" stroke="#eee" stroke-width="1.3"/></svg><span class="t" style="left:17px;top:30px;font-size:7.4px;color:#eee">Type</span><svg class="a" style="left:66px;top:32px" width="5" height="4" viewBox="0 0 5 4"><path d="M0.5 0.5L2.5 2.5L4.5 0.5" fill="none" stroke="#ccc" stroke-width="1"/></svg><svg class="a" style="left:86px;top:27px" width="102" height="14" viewBox="0 0 102 14">
<rect x="1.5" y="2.5" width="9" height="8" fill="none" stroke="#e6e6e6" stroke-width="1"/><rect x="3" y="6" width="6" height="3" fill="#e6e6e6"/>
<circle cx="24" cy="7" r="4" fill="none" stroke="#e6e6e6" stroke-width="1.2"/><path d="M21 10L27 4A4 4 0 0 1 21 10Z" fill="#e6e6e6"/>
<path d="M36 3H45M40.5 3V11M38.5 11H42.5" stroke="#e6e6e6" stroke-width="1.4" fill="none"/>
<rect x="52" y="3" width="8" height="8" fill="none" stroke="#e6e6e6" stroke-width="1.1"/><rect x="51" y="2" width="2" height="2" fill="#e6e6e6"/><rect x="59" y="2" width="2" height="2" fill="#e6e6e6"/><rect x="51" y="10" width="2" height="2" fill="#e6e6e6"/><rect x="59" y="10" width="2" height="2" fill="#e6e6e6"/>
<path d="M68 7V3.5A2.5 2.5 0 0 1 73 3.5" fill="none" stroke="#e6e6e6" stroke-width="1.1"/><rect x="67" y="7" width="7" height="5" fill="#e6e6e6"/><path d="M71 2L75 6" stroke="#e6e6e6" stroke-width="1"/>
<rect x="92" y="5" width="5" height="9" rx="2.5" fill="#444"/><circle cx="94.5" cy="5" r="2.6" fill="#eee"/>
</svg><div class="a" style="left:4px;top:45px;width:107px;height:12px;background:#474747"></div><span class="t" style="left:7px;top:48px;font-size:7.2px;color:#eee">Normal</span><svg class="a" style="left:102px;top:50px" width="5" height="4" viewBox="0 0 5 4"><path d="M0.5 0.5L2.5 2.5L4.5 0.5" fill="none" stroke="#ccc" stroke-width="1"/></svg><span class="t" style="left:114px;top:47.5px;font-size:7.2px;color:#ddd">Opacité :</span><div class="a" style="left:146px;top:45px;width:26px;height:12px;background:#474747"></div><span class="t" style="left:148px;top:48px;font-size:7.2px;color:#eee">100 %</span><div class="a" style="left:173px;top:45px;width:9px;height:12px;background:#4a4a4a"></div><svg class="a" style="left:175px;top:50px" width="5" height="4" viewBox="0 0 5 4"><path d="M0.5 0.5L2.5 2.5L4.5 0.5" fill="none" stroke="#ccc" stroke-width="1"/></svg><div class="a" style="left:0;top:62px;width:188px;height:1px;background:#4a4a4a"></div><span class="t" style="left:4px;top:66.5px;font-size:7.2px;color:#ddd">Verrou :</span><svg class="a" style="left:32px;top:63px" width="90" height="14" viewBox="0 0 90 14">
<rect x="1.5" y="2.5" width="8" height="8" fill="none" stroke="#e6e6e6" stroke-width="1"/><rect x="3" y="4" width="2" height="2" fill="#e6e6e6"/><rect x="6" y="7" width="2" height="2" fill="#e6e6e6"/><rect x="6" y="4" width="2" height="2" fill="#e6e6e6"/><rect x="3" y="7" width="2" height="2" fill="#e6e6e6"/>
<path d="M24 2L18.5 8.5" stroke="#e6e6e6" stroke-width="1.4" stroke-linecap="round"/><path d="M16 12C16 10 17 9 18.5 9 19.5 9 19.5 10 18.5 11 17.5 12 16.5 12 16 12Z" fill="#e6e6e6"/>
<path d="M35 2V12M30 7H40" stroke="#e6e6e6" stroke-width="1.1"/><path d="M35 1l1.5 2h-3zM35 13l1.5-2h-3zM29 7l2 1.5v-3zM41 7l-2 1.5v-3z" fill="#e6e6e6"/>
<path d="M46 4H53V11M46 4V11H53" fill="none" stroke="#e6e6e6" stroke-width="1" stroke-dasharray="1.2 0.6"/><path d="M45 3L55 12" stroke="#e6e6e6" stroke-width="0.9"/>
<path d="M61 6V4.5A2.5 2.5 0 0 1 66 4.5V6" fill="none" stroke="#e6e6e6" stroke-width="1.1"/><rect x="60" y="6" width="7" height="6" fill="#e6e6e6"/>
</svg><span class="t" style="left:124px;top:66.5px;font-size:7.2px;color:#ddd">Fond :</span><div class="a" style="left:146px;top:64px;width:26px;height:12px;background:#474747"></div><span class="t" style="left:148px;top:67px;font-size:7.2px;color:#eee">100 %</span><div class="a" style="left:173px;top:64px;width:9px;height:12px;background:#4a4a4a"></div><svg class="a" style="left:175px;top:69px" width="5" height="4" viewBox="0 0 5 4"><path d="M0.5 0.5L2.5 2.5L4.5 0.5" fill="none" stroke="#ccc" stroke-width="1"/></svg><div class="a" style="left:0;top:81px;width:188px;height:1px;background:#494949"></div><div class="a" style="left:19px;top:82px;width:159px;height:43px;background:#696969"></div><div class="a" style="left:0;top:125px;width:178px;height:1px;background:#4c4c4c"></div><div class="a" style="left:19px;top:126px;width:159px;height:43px;background:#575757"></div><div class="a" style="left:0;top:169px;width:178px;height:1px;background:#4c4c4c"></div><div class="a" style="left:178px;top:82px;width:10px;height:378px;background:#4d4d4d"></div><svg class="a" style="left:6px;top:100px" width="10" height="7" viewBox="0 0 10 7"><path d="M0.5 3.5C2 1 3.5 0.5 5 0.5S8 1 9.5 3.5C8 6 6.5 6.5 5 6.5S2 6 0.5 3.5Z" fill="#f2f2f2"/><circle cx="5" cy="3.5" r="1.6" fill="#696969"/></svg><div class="a" style="left:7px;top:143px;width:9px;height:9px;border:1px solid #5c5c5c"></div><div class="a" style="left:22px;top:83px;width:34px;height:42px;border:1px solid #8a8a8a"></div><div class="a" style="left:22px;top:83px;width:8px;height:8px;border-left:1.5px solid #f0f0f0;border-top:1.5px solid #f0f0f0"></div><div class="a" style="left:48px;top:83px;width:8px;height:8px;border-right:1.5px solid #f0f0f0;border-top:1.5px solid #f0f0f0"></div><div class="a" style="left:22px;top:117px;width:8px;height:8px;border-left:1.5px solid #f0f0f0;border-bottom:1.5px solid #f0f0f0"></div><div class="a" style="left:48px;top:117px;width:8px;height:8px;border-right:1.5px solid #f0f0f0;border-bottom:1.5px solid #f0f0f0"></div><div class="a" style="left:23.5px;top:85px;width:30px;height:38px;background:#fff;overflow:hidden"><svg width="30" height="38" viewBox="0 0 30 38" preserveAspectRatio="none"><path d="M8 5L23 5 22.5 9 21.5 27 9 27 8.5 9Z" fill="#cacaca"/><path d="M9 7L14 10 13.5 17 10 20Z" fill="#acacac"/><path d="M15 8L17 12 16 23 13 21Z" fill="#b8b8b8"/><path d="M18 10L21 9 20.5 22 18 24Z" fill="#bebebe"/><path d="M8 5L23 5 23 7 8 7Z" fill="#bcbcbc"/><path d="M9 28L21.5 28 21.5 34 9 34Z" fill="#f0f0f0"/></svg></div><div class="a" style="left:24px;top:129px;width:29px;height:37px;background:#fff;overflow:hidden"><svg width="29" height="37" viewBox="0 0 30 38" preserveAspectRatio="none"><path d="M8 5L23 5 22.5 9 21.5 27 9 27 8.5 9Z" fill="#cacaca"/><path d="M9 7L14 10 13.5 17 10 20Z" fill="#acacac"/><path d="M15 8L17 12 16 23 13 21Z" fill="#b8b8b8"/><path d="M18 10L21 9 20.5 22 18 24Z" fill="#bebebe"/><path d="M8 5L23 5 23 7 8 7Z" fill="#bcbcbc"/><path d="M9 28L21.5 28 21.5 34 9 34Z" fill="#f0f0f0"/></svg></div><span class="t" style="left:59px;top:100.5px;font-size:7px;color:#eeeeee">Calque 1</span><span class="t" style="left:59px;top:144px;font-size:7.47px;color:#eeeeee">Arrière-plan</span><svg class="a" style="left:159px;top:141px" width="8" height="11" viewBox="0 0 8 11"><path d="M2 5V3.5A2 2 0 0 1 6 3.5V5" fill="none" stroke="#ddd" stroke-width="1.1"/><rect x="1" y="5" width="6" height="5.5" fill="none" stroke="#ddd" stroke-width="1.1"/><rect x="3.5" y="7" width="1" height="2" fill="#ddd"/></svg><div class="a" style="left:0;top:460px;width:188px;height:1px;background:#474747"></div><div class="a" style="left:0;top:461px;width:188px;height:16px;background:#525252"></div><div class="a" style="left:0;top:477px;width:188px;height:1px;background:#3e3e3e"></div><div class="a" style="left:0;top:478px;width:188px;height:4px;background:#4f4f4f"></div><div class="a" style="left:0;top:482px;width:188px;height:1px;background:#3e3e3e"></div><svg class="a" style="left:48px;top:462px" width="120" height="14" viewBox="0 0 120 14">
<rect x="3" y="4.5" width="5" height="4" rx="2" fill="none" stroke="#9a9a9a" stroke-width="1"/><rect x="8" y="4.5" width="5" height="4" rx="2" fill="none" stroke="#9a9a9a" stroke-width="1"/>
<text x="22" y="11" font-family="Liberation Serif" font-style="italic" font-size="10" fill="#e6e6e6">fx</text><rect x="30" y="11" width="2" height="2" fill="#e6e6e6"/>
<rect x="40" y="3" width="10" height="8" fill="#e6e6e6"/><circle cx="45" cy="7" r="2.6" fill="#515151"/>
<circle cx="63" cy="7" r="4" fill="none" stroke="#e6e6e6" stroke-width="1.2"/><path d="M60 10L66 4A4 4 0 0 1 60 10Z" fill="#e6e6e6"/><rect x="66" y="11" width="2" height="2" fill="#e6e6e6"/>
<path d="M77 3H81L82 4.5H87V11H77Z" fill="#e6e6e6"/>
<rect x="95.5" y="2.5" width="9" height="9" fill="none" stroke="#e6e6e6" stroke-width="1.1"/><path d="M100 5V9M98 7H102" stroke="#e6e6e6" stroke-width="1.2"/>
<path d="M113 4H120M114 5V12H119V5" fill="#ccc" stroke="#ccc" stroke-width="1"/><rect x="115" y="2" width="3" height="2" fill="none" stroke="#ccc" stroke-width="0.8"/>
</svg></div>
<div id="menu" class="a"><div class="a" style="left:147px;top:148px;width:349px;height:453px;background:#ebe8f2;opacity:.43;filter:blur(16px)"></div><span class="t" style="left:14.5px;top:3.5px;font-size:8.53px;font-weight:700;color:#efefef">Tout sélectionner</span><span class="t" style="right:14px;top:3.5px;font-size:8.8px;font-weight:700;color:#efefef;letter-spacing:0.3px">⌘A</span><span class="t" style="left:14.5px;top:15.5px;font-size:8.53px;font-weight:700;color:#8a898e">Désélectionner</span><span class="t" style="right:14px;top:15.5px;font-size:8.8px;font-weight:700;color:#8a898e;letter-spacing:0.3px">⌘D</span><span class="t" style="left:14.5px;top:27.5px;font-size:8.53px;font-weight:700;color:#8a898e">Resélectionner</span><span class="t" style="right:14px;top:27.5px;font-size:8.8px;font-weight:700;color:#8a898e;letter-spacing:0.3px">⇧⌘D</span><span class="t" style="left:14.5px;top:39.5px;font-size:8.53px;font-weight:700;color:#8a898e">Intervertir</span><span class="t" style="right:14px;top:39.5px;font-size:8.8px;font-weight:700;color:#8a898e;letter-spacing:0.3px">⇧⌘I</span><div class="a" style="left:8px;top:54.5px;width:192px;height:1px;background:rgba(255,255,255,.16)"></div><span class="t" style="left:14.5px;top:59.5px;font-size:8.53px;font-weight:700;color:#efefef">Tous les calques</span><span class="t" style="right:14px;top:59.5px;font-size:8.8px;font-weight:700;color:#efefef;letter-spacing:0.3px">⌥⌘A</span><span class="t" style="left:14.5px;top:71.5px;font-size:8.53px;font-weight:700;color:#efefef">Désélectionner les calques</span><span class="t" style="left:14.5px;top:83.5px;font-size:8.53px;font-weight:700;color:#efefef">Rechercher des calques</span><span class="t" style="right:14px;top:83.5px;font-size:8.8px;font-weight:700;color:#efefef;letter-spacing:0.3px">⌥⇧⌘F</span><span class="t" style="left:14.5px;top:95.5px;font-size:8.53px;font-weight:700;color:#efefef">Isoler les calques</span><div class="a" style="left:8px;top:111.0px;width:192px;height:1px;background:rgba(255,255,255,.16)"></div><span class="t" style="left:14.5px;top:115.5px;font-size:8.53px;font-weight:700;color:#efefef">Plage de couleurs...</span><span class="t" style="left:14.5px;top:127.5px;font-size:8.53px;font-weight:700;color:#efefef">Zone de mise au point...</span><div class="a" style="left:2px;top:139.5px;width:205px;height:12px;border-radius:3px;background:#2a74d8"></div><span class="t" style="left:14.5px;top:140.5px;font-size:8.53px;font-weight:700;color:#ffffff">Sujet</span><div class="a" style="left:8px;top:156.0px;width:192px;height:1px;background:rgba(255,255,255,.16)"></div><span class="t" style="left:14.5px;top:159.5px;font-size:8.53px;font-weight:700;color:#efefef">Sélectionner et masquer...</span><span class="t" style="right:14px;top:159.5px;font-size:8.8px;font-weight:700;color:#efefef;letter-spacing:0.3px">⌥⌘R</span><span class="t" style="left:14.5px;top:171.5px;font-size:8.53px;font-weight:700;color:#8a898e">Modifier</span><svg class="a" style="left:194px;top:173.0px" width="4" height="6" viewBox="0 0 4 6"><path d="M0.5 0.5L3 3L0.5 5.5" fill="none" stroke="#b0afb4" stroke-width="1"/></svg><div class="a" style="left:8px;top:187.0px;width:192px;height:1px;background:rgba(255,255,255,.16)"></div><span class="t" style="left:14.5px;top:191.5px;font-size:8.53px;font-weight:700;color:#8a898e">Etendre</span><span class="t" style="left:14.5px;top:203.5px;font-size:8.53px;font-weight:700;color:#8a898e">Généraliser</span><div class="a" style="left:8px;top:218.0px;width:192px;height:1px;background:rgba(255,255,255,.16)"></div><span class="t" style="left:14.5px;top:223.5px;font-size:8.53px;font-weight:700;color:#8a898e">Transformer la sélection</span><div class="a" style="left:8px;top:238.0px;width:192px;height:1px;background:rgba(255,255,255,.16)"></div><span class="t" style="left:14.5px;top:243.0px;font-size:8.53px;font-weight:700;color:#efefef">Mode Masque</span><div class="a" style="left:8px;top:258.0px;width:192px;height:1px;background:rgba(255,255,255,.16)"></div><span class="t" style="left:14.5px;top:262.5px;font-size:8.53px;font-weight:700;color:#efefef">Récupérer la sélection...</span><span class="t" style="left:14.5px;top:274.5px;font-size:8.53px;font-weight:700;color:#8a898e">Mémoriser la sélection...</span><div class="a" style="left:8px;top:289.0px;width:192px;height:1px;background:rgba(255,255,255,.16)"></div><span class="t" style="left:14.5px;top:294.5px;font-size:8.53px;font-weight:700;color:#8a898e">Nouvelle extrusion 3D</span></div>
</body></html>
